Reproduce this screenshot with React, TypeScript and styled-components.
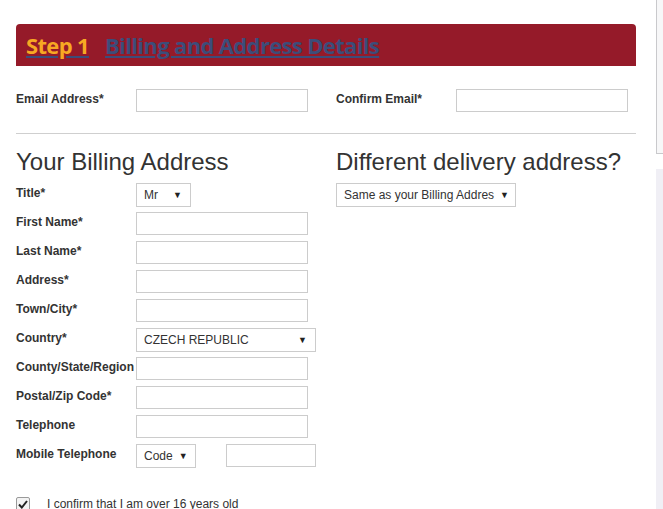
import React from 'react';
import styled, { createGlobalStyle } from 'styled-components';

const GlobalStyle = createGlobalStyle`
  html, body {
    margin: 0;
    padding: 0;
    background: #ffffff;
    overflow: hidden;
  }
  body {
    font-family: "Liberation Sans", Arial, sans-serif;
    color: #333333;
  }
`;

const Page = styled.div`
  display: flex;
  width: 663px;
  height: 509px;
  overflow: hidden;
`;

const Main = styled.div`
  width: 620px;
  padding: 24px 0 0 16px;
  flex-shrink: 0;
`;

const Gutter = styled.div`
  flex: 1;
`;

const ScrollStrip = styled.div`
  width: 7px;
  display: flex;
  flex-direction: column;
`;

const ScrollThumb = styled.div`
  height: 153px;
  border-left: 1px solid #c9c9cc;
  border-bottom: 1px solid #c9c9cc;
  background: #f7f7f8;
`;

const ScrollTrack = styled.div`
  margin-top: 15px;
  flex: 1;
  background: #f0eff5;
`;

const StepHeader = styled.div`
  height: 42px;
  background: #951a29;
  border-radius: 4px 4px 0 0;
  display: flex;
  align-items: center;
  padding-left: 10px;
`;

const StepLink = styled.a`
  font-family: "Open Sans", "Liberation Sans", sans-serif;
  font-weight: 700;
  font-size: 22px;
  letter-spacing: -0.65px;
  color: #3c4d7a;
  text-decoration: underline;
  text-decoration-color: #3c4d7a;
  text-underline-offset: 2px;
  cursor: pointer;
`;

const StepNumber = styled.span`
  color: #f7a823;
  margin-right: 16px;
`;

const EmailRow = styled.div`
  display: grid;
  grid-template-columns: 120px 200px 120px 172px;
  align-items: start;
  margin-top: 23px;
`;

const Divider = styled.hr`
  border: none;
  border-top: 1px solid #cfcfcf;
  margin: 21px 0 0 0;
`;

const Columns = styled.div`
  display: grid;
  grid-template-columns: 320px 300px;
`;

const Column = styled.div`
  display: flex;
  flex-direction: column;
`;

const SectionTitle = styled.h2`
  font-family: "Liberation Sans", Arial, sans-serif;
  font-weight: 400;
  font-size: 24px;
  line-height: 28px;
  color: #333333;
  margin: 14px 0 4px 0;
`;

const FieldRow = styled.div`
  display: flex;
  align-items: center;
  height: 29px;
`;

const Label = styled.label`
  width: 120px;
  flex-shrink: 0;
  font-size: 12px;
  font-weight: 700;
  color: #333333;
  white-space: nowrap;
  padding-top: 3px;
`;

const RowLabel = styled(Label)`
  align-self: flex-start;
  padding-top: 6px;
`;

const TextInput = styled.input<{ $width?: number }>`
  box-sizing: border-box;
  width: ${p => p.$width ?? 172}px;
  height: 23px;
  border: 1px solid #cccccc;
  background: #ffffff;
  padding: 0 6px;
  font-size: 12px;
  font-family: "Liberation Sans", Arial, sans-serif;
  margin: 0;
  outline: none;
`;

const SelectBox = styled.div<{ $width: number }>`
  box-sizing: border-box;
  width: ${p => p.$width}px;
  height: 24px;
  border: 1px solid #cccccc;
  background: #ffffff;
  display: flex;
  align-items: center;
  justify-content: space-between;
  padding: 0 8px 0 7px;
  font-size: 12px;
  color: #333333;
  white-space: nowrap;
  overflow: hidden;
`;

const Caret = styled.span`
  font-size: 9px;
  color: #222222;
  margin-left: 6px;
`;

const Spacer = styled.div<{ $w: number }>`
  width: ${p => p.$w}px;
  flex-shrink: 0;
`;

const ConfirmRow = styled.div`
  display: flex;
  align-items: center;
  margin-top: 27px;
  gap: 17px;
  font-size: 12px;
  color: #333333;
`;

const CheckMark = styled.span`
  box-sizing: border-box;
  width: 14px;
  height: 14px;
  border: 1px solid #9a9a9a;
  border-radius: 2px;
  background: #f3f3f3;
  display: flex;
  align-items: center;
  justify-content: center;
`;

function Select({ value, width }: { value: string; width: number }) {
  return (
    <SelectBox $width={width}>
      <span>{value}</span>
      <Caret>▼</Caret>
    </SelectBox>
  );
}

const billingFields = [
  'First Name*',
  'Last Name*',
  'Address*',
  'Town/City*',
];

const moreFields = ['County/State/Region', 'Postal/Zip Code*', 'Telephone'];

export default function App() {
  return (
    <>
      <GlobalStyle />
      <Page>
        <Main>
          <StepHeader>
            <StepLink>
              <StepNumber>Step 1</StepNumber>
              Billing and Address Details
            </StepLink>
          </StepHeader>

          <EmailRow>
            <Label>Email Address*</Label>
            <TextInput />
            <Label>Confirm Email*</Label>
            <TextInput />
          </EmailRow>

          <Divider />

          <Columns>
            <Column>
              <SectionTitle>Your Billing Address</SectionTitle>
              <FieldRow>
                <RowLabel>Title*</RowLabel>
                <Select value="Mr" width={55} />
              </FieldRow>
              {billingFields.map(f => (
                <FieldRow key={f}>
                  <RowLabel>{f}</RowLabel>
                  <TextInput />
                </FieldRow>
              ))}
              <FieldRow>
                <RowLabel>Country*</RowLabel>
                <Select value="CZECH REPUBLIC" width={180} />
              </FieldRow>
              {moreFields.map(f => (
                <FieldRow key={f}>
                  <RowLabel>{f}</RowLabel>
                  <TextInput />
                </FieldRow>
              ))}
              <FieldRow>
                <RowLabel>Mobile Telephone</RowLabel>
                <Select value="Code" width={60} />
                <Spacer $w={30} />
                <TextInput $width={90} />
              </FieldRow>
            </Column>
            <Column>
              <SectionTitle>Different delivery address?</SectionTitle>
              <FieldRow>
                <Select value="Same as your Billing Addres" width={180} />
              </FieldRow>
            </Column>
          </Columns>

          <ConfirmRow>
            <CheckMark>
              <svg width="10" height="9" viewBox="0 0 10 9">
                <path d="M1 4.5 L3.8 7.5 L9 1" fill="none" stroke="#222" strokeWidth="2" />
              </svg>
            </CheckMark>
            <span>I confirm that I am over 16 years old</span>
          </ConfirmRow>
        </Main>
        <Gutter />
        <ScrollStrip>
          <ScrollThumb />
          <ScrollTrack />
        </ScrollStrip>
      </Page>
    </>
  );
}
